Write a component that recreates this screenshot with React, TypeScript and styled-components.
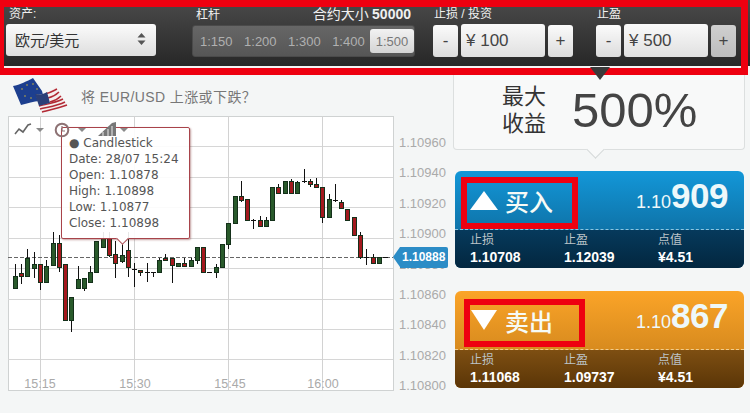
import React from "react";
import styled, { createGlobalStyle } from "styled-components";

const GlobalStyle = createGlobalStyle`
    html, body {
        margin: 0;
        padding: 0;
        background: #f4f6f6;
    }
    body {
        width: 750px;
        height: 413px;
        overflow: hidden;
        font-family: "Liberation Sans", "Noto Sans CJK SC", sans-serif;
    }
`;

const Page = styled.div`
    position: relative;
    width: 750px;
    height: 413px;
`;

const TopBar = styled.div`
    box-sizing: border-box;
    width: 100%;
    height: 68px;
    padding: 5px 0 0 6px;
    display: flex;
    background: linear-gradient(#4a4a4a, #272727);
    border-bottom: 2px solid #f4f4f4;
`;

const HighlightFrame = styled.div`
    position: absolute;
    top: 0;
    left: 0;
    box-sizing: border-box;
    width: 748px;
    height: 75px;
    border: 7px solid #ee0010;
    border-left-width: 4px;
    pointer-events: none;
    z-index: 3;
`;

const Field = styled.div<{ $width: number; $gapRight: number }>`
    width: ${(p) => p.$width}px;
    margin-right: ${(p) => p.$gapRight}px;
    flex: none;
`;

const FieldLabel = styled.div<{ $indent: number }>`
    box-sizing: border-box;
    display: flex;
    justify-content: space-between;
    align-items: baseline;
    height: 19px;
    padding: 1px 4px 0 ${(p) => p.$indent}px;
    line-height: 17px;
    font-size: 12px;
    color: #f0f0f0;
    em {
        font-style: normal;
        font-size: 14px;
    }
    b {
        font-size: 14px;
    }
`;

const AssetSelect = styled.div`
    box-sizing: border-box;
    height: 32px;
    padding: 0 10px 2px 9px;
    display: flex;
    align-items: center;
    justify-content: space-between;
    border-radius: 3px;
    background: linear-gradient(#fbfbfb, #dedede);
    font-size: 15px;
    color: #333;
`;

const LeverageGroup = styled.div`
    box-sizing: border-box;
    height: 32px;
    margin-top: 1px;
    padding: 0 1px 0 7px;
    display: flex;
    align-items: center;
    gap: 11.5px;
    border-radius: 3px;
    background: linear-gradient(#666, #565656);
    border: 1px solid #4a4a4a;
`;

const LeverageOption = styled.span<{ $active?: boolean }>`
    box-sizing: border-box;
    height: 24px;
    line-height: 26px;
    font-size: 13px;
    margin-left: ${(p) => (p.$active ? "-6px" : "0")};
    padding: ${(p) => (p.$active ? "0 5.5px" : "0")};
    border-radius: 3px;
    color: ${(p) => (p.$active ? "#777" : "#b0b0b0")};
    background: ${(p) => (p.$active ? "linear-gradient(#f2f2f2, #d4d4d4)" : "none")};
`;

const Stepper = styled.div`
    display: flex;
    gap: 3px;
    align-items: flex-start;
`;

const StepButton = styled.div<{ $pressed?: boolean }>`
    width: 25px;
    height: 32px;
    margin-top: 1px;
    border-radius: 3px;
    display: flex;
    align-items: center;
    justify-content: center;
    font-size: 17px;
    color: #444;
    background: ${(p) =>
        p.$pressed ? "linear-gradient(#cfcfcf, #bdbdbd)" : "linear-gradient(#fbfbfb, #dcdcdc)"};
`;

const AmountInput = styled.div`
    box-sizing: border-box;
    width: 84px;
    height: 33px;
    line-height: 33px;
    padding-left: 5px;
    border-radius: 3px;
    font-size: 17px;
    color: #444;
    background: linear-gradient(#fafafa, #e0e0e0);
`;

const Main = styled.div`
    display: flex;
    padding-left: 8px;
`;

const LeftColumn = styled.div`
    width: 437px;
    padding-top: 8px;
    margin-right: 8px;
`;

const QuestionRow = styled.div`
    height: 40px;
    display: flex;
    align-items: center;
    padding-left: 4px;
    gap: 13px;
    font-size: 14px;
    letter-spacing: 0.4px;
    color: #777;
`;

const ChartRow = styled.div`
    position: relative;
    display: flex;
`;

const ChartBox = styled.div`
    position: relative;
    width: 386px;
    height: 275px;
    flex: none;
    svg.plot {
        display: block;
    }
`;

const AxisText = styled.text`
    font-size: 12.5px;
    fill: #aaa;
    text-anchor: middle;
`;

const ChartTools = styled.div`
    position: absolute;
    top: 5px;
    left: 5px;
    display: flex;
    z-index: 2;
`;

const Tooltip = styled.div`
    position: absolute;
    left: 53px;
    top: 11px;
    box-sizing: border-box;
    width: 129px;
    height: 112px;
    padding: 8px 0 0 7px;
    background: rgba(255, 255, 255, 0.9);
    border: 1px solid #a8434a;
    border-radius: 2px;
    box-shadow: 1px 1px 2px rgba(120, 40, 40, 0.45);
    font-family: "DejaVu Sans", sans-serif;
    font-size: 12px;
    line-height: 15.9px;
    white-space: nowrap;
    color: #555;
    &::after {
        content: "";
        position: absolute;
        left: 56px;
        bottom: -5px;
        width: 8px;
        height: 8px;
        background: #fff;
        border-right: 1px solid #a8434a;
        border-bottom: 1px solid #a8434a;
        transform: rotate(45deg);
    }
`;

const PriceAxis = styled.div`
    box-sizing: border-box;
    height: 277px;
    padding: 20px 0 0 5px;
    display: flex;
    flex-direction: column;
    justify-content: space-between;
    font-size: 13px;
    line-height: 14px;
    color: #aaa;
`;

const PriceTag = styled.div`
    position: absolute;
    left: 392px;
    top: 131px;
    width: 48px;
    height: 21px;
    padding-left: 2px;
    line-height: 21px;
    font-size: 12px;
    font-weight: 700;
    color: #fff;
    background: #2b8cc6;
    border-radius: 0 2px 2px 0;
    box-sizing: border-box;
    &::before {
        content: "";
        position: absolute;
        left: -7px;
        top: 0;
        border-style: solid;
        border-width: 10.5px 7px 10.5px 0;
        border-color: transparent #2b8cc6 transparent transparent;
    }
`;

const RightColumn = styled.div`
    width: 292px;
    flex: none;
`;

const ReturnBox = styled.div`
    position: relative;
    box-sizing: border-box;
    height: 82px;
    margin-bottom: 21px;
    padding-left: 48px;
    display: flex;
    align-items: center;
    gap: 26px;
    background: #f8f9f9;
    border: 1px solid #dcdfdf;
    border-top: none;
    border-radius: 0 0 4px 4px;
    &::before {
        content: "";
        position: absolute;
        z-index: 4;
        left: 136px;
        top: -1px;
        border-style: solid;
        border-width: 13px 10px 0;
        border-color: #3a3a3a transparent transparent;
    }
    &::after {
        content: "";
        position: absolute;
        left: 135px;
        bottom: -7px;
        width: 12px;
        height: 12px;
        background: #f8f9f9;
        border-right: 1px solid #d4d8d8;
        border-bottom: 1px solid #d4d8d8;
        transform: rotate(45deg);
    }
`;

const ReturnLabel = styled.div`
    font-size: 22px;
    line-height: 27px;
    color: #333;
    padding-top: 2px;
`;

const ReturnValue = styled.div`
    font-size: 49px;
    line-height: 60px;
    color: #444;
    padding-top: 2px;
`;

const TradeCard = styled.div<{ $top: string; $mid: string; $low: string; $low2: string; $line: string }>`
    margin: 0 1px 23px 2px;
    border-radius: 6px;
    overflow: hidden;
    color: #fff;
    background: linear-gradient(${(p) => p.$top}, ${(p) => p.$mid});
    .quote {
        box-sizing: border-box;
        height: 59px;
        padding: 0 16px 0 15px;
        display: flex;
        align-items: center;
        justify-content: space-between;
        border-bottom: 1px dashed ${(p) => p.$line};
    }
    .details {
        height: 38px;
        padding-left: 15px;
        display: grid;
        grid-template-columns: 94px 94px 1fr;
        background: linear-gradient(${(p) => p.$low}, ${(p) => p.$low2});
    }
`;

const Side = styled.div`
    display: flex;
    align-items: center;
    gap: 7px;
    font-size: 24px;
    font-weight: 500;
    color: #f6fbf6;
`;

const Rate = styled.div`
    padding-bottom: 8px;
    font-size: 18px;
    font-weight: 400;
    color: #eef8fa;
    b {
        font-size: 35px;
        font-weight: 700;
        letter-spacing: -0.5px;
    }
`;

const Detail = styled.div`
    padding-top: 3px;
    font-size: 12px;
    line-height: 15px;
    color: #bcc4c8;
    b {
        display: block;
        font-size: 14px;
        line-height: 18px;
        color: #fff;
    }
`;

const RedBox = styled.div<{ $left: number; $top: number; $width: number; $height: number }>`
    position: absolute;
    box-sizing: border-box;
    left: ${(p) => p.$left}px;
    top: ${(p) => p.$top}px;
    width: ${(p) => p.$width}px;
    height: ${(p) => p.$height}px;
    border: 6px solid #ee0010;
`;

type Candle = [number, number, number, number, number, "g" | "r" | "k"];

// x, wick top, body top, body bottom, wick bottom, colour (page pixels)
const candles: Candle[] = [
    [15, 264, 276, 288, 288, "g"], [21, 264, 273, 276, 284, "r"], [27, 249, 258, 276, 276, "g"],
    [34, 252, 264, 268, 278, "g"], [40, 264, 264, 282, 290, "r"], [46, 260, 266, 282, 282, "g"],
    [53, 232, 243, 265, 265, "g"], [59, 235, 243, 267, 272, "r"], [65, 264, 264, 320, 320, "r"],
    [71, 297, 297, 320, 332, "g"], [78, 266, 279, 288, 288, "g"], [84, 278, 278, 288, 291, "g"],
    [90, 266, 272, 282, 282, "g"], [96, 241, 241, 272, 272, "g"], [103, 232, 238, 247, 247, "g"],
    [109, 232, 238, 255, 257, "r"], [115, 241, 254, 263, 278, "r"], [122, 242, 255, 261, 263, "g"],
    [128, 232, 250, 267, 277, "r"], [134, 263, 269, 270, 287, "k"], [140, 270, 270, 272, 276, "r"],
    [147, 263, 272, 273, 282, "k"], [153, 272, 272, 273, 277, "k"], [159, 258, 260, 272, 272, "g"],
    [165, 254, 258, 260, 261, "r"], [172, 258, 258, 265, 283, "r"], [178, 263, 263, 266, 266, "g"],
    [184, 258, 263, 266, 266, "r"], [191, 258, 260, 266, 266, "g"], [197, 247, 247, 260, 264, "g"],
    [203, 247, 247, 272, 272, "r"], [209, 272, 272, 273, 273, "k"], [216, 264, 267, 272, 278, "g"],
    [222, 244, 244, 267, 267, "g"], [228, 223, 223, 244, 249, "g"], [235, 196, 196, 223, 223, "g"],
    [241, 181, 196, 200, 202, "r"], [247, 199, 199, 220, 220, "r"], [253, 219, 220, 221, 229, "k"],
    [260, 216, 220, 226, 226, "r"], [266, 217, 220, 226, 226, "g"], [272, 187, 187, 220, 220, "g"],
    [278, 184, 187, 193, 193, "r"], [285, 181, 181, 193, 193, "g"], [291, 179, 181, 193, 193, "r"],
    [297, 181, 182, 193, 193, "g"], [304, 169, 181, 182, 183, "k"], [310, 179, 181, 184, 187, "r"],
    [316, 178, 184, 187, 187, "r"], [322, 187, 187, 217, 223, "r"], [329, 194, 199, 217, 217, "g"],
    [335, 184, 200, 201, 202, "k"], [341, 200, 202, 208, 208, "r"], [347, 209, 209, 220, 220, "r"],
    [354, 217, 217, 235, 235, "r"], [360, 232, 235, 257, 259, "r"], [366, 249, 257, 258, 265, "k"],
    [373, 254, 257, 263, 263, "r"], [379, 257, 257, 263, 263, "g"], [385, 257, 257, 258, 258, "k"],
];

const bodyFill = { g: "#295a2b", r: "#a3191e", k: "#111" };

const gridRows = [146.5, 177.5, 207.5, 238.5, 268.5, 299.5, 329.5, 359.5];
const gridCols = [40.5, 134.5, 228.5, 322.5];
const timeLabels: [number, string][] = [[40, "15:15"], [135, "15:30"], [230, "15:45"], [323, "16:00"]];
const prices = ["1.10960", "1.10940", "1.10920", "1.10900", "1.10880", "1.10860", "1.10840", "1.10820", "1.10800"];
const leverages = ["1:150", "1:200", "1:300", "1:400"];

const Caret = ({ left }: { left: number }) => (
    <path d={`M${left} 7h8l-4 4z`} fill="#8a8a8a" />
);

const Flags = () => (
    <svg width="56" height="38" viewBox="0 0 56 38">
        <path d="M1 9C8 8 15 4 21 1L30 14 33 25C26 22 18 26 9 28Z" fill="#1d3f8f" />
        <g fill="#c8b23a">
            <circle cx="10" cy="12" r="0.8" />
            <circle cx="15" cy="8" r="0.8" />
            <circle cx="21" cy="7" r="0.8" />
            <circle cx="25" cy="12" r="0.8" />
            <circle cx="13" cy="19" r="0.8" />
            <circle cx="19" cy="21" r="0.8" />
            <circle cx="25" cy="18" r="0.8" />
        </g>
        <path d="M24 18C32 18 38 14 44 10L55 28C48 30 40 32 30 36Z" fill="#f4efee" />
        <g fill="none" stroke="#b22a35" strokeWidth="1.5">
            <path d="M33 17C38 16 41 14 45 12" />
            <path d="M36 21C40 20 44 18 47 15" />
            <path d="M38 25C42 24 46 22 49 19" />
            <path d="M27 29C35 27 43 26 51 22" />
            <path d="M28 32C36 30 45 29 53 25" />
            <path d="M30 35C38 33 47 31 55 28" />
        </g>
        <path d="M23 17C28 18 32 17 35 15L38 26 27 29Z" fill="#2b3f78" />
    </svg>
);

const Tools = () => (
    <ChartTools>
        <svg width="125" height="18" viewBox="0 0 125 18">
            <path d="M2 13L6 8 10 11 15 4 18 3" fill="none" stroke="#666" strokeWidth="1.6" />
            <Caret left={23} />
            <circle cx="49" cy="9" r="6.3" fill="none" stroke="#8d7274" strokeWidth="2" />
            <path d="M49 5V10H52" fill="none" stroke="#8d7274" strokeWidth="1.2" />
            <Caret left={65} />
            <path d="M85 15L99 2 103 1V15Z" fill="#777" />
            <path d="M90 15V11M95 15V8M99 15V5" stroke="#eee" strokeWidth="1" />
            <Caret left={107} />
        </svg>
    </ChartTools>
);

const Plot = () => (
    <svg className="plot" width="386" height="275" viewBox="8 116 386 275">
        <rect x="8.5" y="116.5" width="385" height="274" fill="#fff" stroke="#cfd2d2" />
        {gridRows.map((y) => (
            <line key={y} x1="8" x2="393" y1={y} y2={y} stroke="#d6d6d6" />
        ))}
        {gridCols.map((x) => (
            <line key={x} x1={x} x2={x} y1="116" y2="390" stroke="#d2d2d2" />
        ))}
        <line x1="8" x2="393" y1="257.5" y2="257.5" stroke="#666" strokeDasharray="4 2" />
        {candles.map(([x, wt, t, b, wb, c]) => (
            <g key={x}>
                <line x1={x + 0.5} x2={x + 0.5} y1={wt} y2={wb} stroke="#111" />
                {c === "k" ? (
                    <line x1={x - 2} x2={x + 3} y1={t + 0.5} y2={t + 0.5} stroke="#111" />
                ) : (
                    <rect x={x - 1.5} y={t + 0.5} width="4" height={b - t} fill={bodyFill[c]} stroke="#14301a" />
                )}
            </g>
        ))}
        {timeLabels.map(([x, label]) => (
            <AxisText key={label} x={x} y="388">
                {label}
            </AxisText>
        ))}
    </svg>
);

const SideArrow = ({ up }: { up: boolean }) => (
    <svg width="28" height="20" viewBox="0 0 28 20">
        <path d={up ? "M14 1L28 20H0Z" : "M1 0H27L14 20Z"} fill="#fff" />
    </svg>
);

type CardProps = {
    up: boolean;
    label: string;
    big: string;
    stop: string;
    limit: string;
};

const Card = ({ up, label, big, stop, limit }: CardProps) => (
    <TradeCard
        $top={up ? "#1397d8" : "#fba428"}
        $mid={up ? "#0b5c8a" : "#c07a18"}
        $low={up ? "#063a5c" : "#7e4f12"}
        $low2={up ? "#03273f" : "#5a3507"}
        $line={up ? "#8fc6e0" : "#f2cd8c"}
    >
        <div className="quote">
            <Side>
                <SideArrow up={up} />
                {label}
            </Side>
            <Rate>
                1.10<b>{big}</b>
            </Rate>
        </div>
        <div className="details">
            <Detail>
                止损<b>{stop}</b>
            </Detail>
            <Detail>
                止盈<b>{limit}</b>
            </Detail>
            <Detail>
                点值<b>¥4.51</b>
            </Detail>
        </div>
    </TradeCard>
);

const App = () => {
    return (
        <Page>
            <GlobalStyle />
            <TopBar>
                <Field $width={150} $gapRight={36}>
                    <FieldLabel $indent={3}>资产:</FieldLabel>
                    <AssetSelect>
                        欧元/美元
                        <svg width="9" height="12" viewBox="0 0 9 12">
                            <path d="M4.5 0L8.5 4.5H.5ZM4.5 12L.5 7.5H8.5Z" fill="#555" />
                        </svg>
                    </AssetSelect>
                </Field>
                <Field $width={223} $gapRight={18}>
                    <FieldLabel $indent={4}>
                        <span>杠杆</span>
                        <span>
                            <em>合约大小</em> <b>50000</b>
                        </span>
                    </FieldLabel>
                    <LeverageGroup>
                        {leverages.map((l) => (
                            <LeverageOption key={l}>{l}</LeverageOption>
                        ))}
                        <LeverageOption $active>1:500</LeverageOption>
                    </LeverageGroup>
                </Field>
                <Field $width={140} $gapRight={23}>
                    <FieldLabel $indent={1}>止损 / 投资</FieldLabel>
                    <Stepper>
                        <StepButton>-</StepButton>
                        <AmountInput>¥ 100</AmountInput>
                        <StepButton>+</StepButton>
                    </Stepper>
                </Field>
                <Field $width={140} $gapRight={0}>
                    <FieldLabel $indent={1}>止盈</FieldLabel>
                    <Stepper>
                        <StepButton>-</StepButton>
                        <AmountInput>¥ 500</AmountInput>
                        <StepButton $pressed>+</StepButton>
                    </Stepper>
                </Field>
            </TopBar>
            <HighlightFrame />
            <Main>
                <LeftColumn>
                    <QuestionRow>
                        <Flags />
                        将 EUR/USD 上涨或下跌？
                    </QuestionRow>
                    <ChartRow>
                        <ChartBox>
                            <Plot />
                            <Tools />
                            <Tooltip>
                                ● Candlestick
                                <br />
                                Date: 28/07 15:24
                                <br />
                                Open: 1.10878
                                <br />
                                High: 1.10898
                                <br />
                                Low: 1.10877
                                <br />
                                Close: 1.10898
                            </Tooltip>
                        </ChartBox>
                        <PriceAxis>
                            {prices.map((p) => (
                                <span key={p}>{p}</span>
                            ))}
                        </PriceAxis>
                        <PriceTag>1.10888</PriceTag>
                    </ChartRow>
                </LeftColumn>
                <RightColumn>
                    <ReturnBox>
                        <ReturnLabel>
                            最大
                            <br />
                            收益
                        </ReturnLabel>
                        <ReturnValue>500%</ReturnValue>
                    </ReturnBox>
                    <Card up label="买入" big="909" stop="1.10708" limit="1.12039" />
                    <Card up={false} label="卖出" big="867" stop="1.11068" limit="1.09737" />
                </RightColumn>
            </Main>
            <RedBox $left={461} $top={177} $width={117} $height={52} />
            <RedBox $left={464} $top={299} $width={121} $height={48} />
        </Page>
    );
};

export default App;
